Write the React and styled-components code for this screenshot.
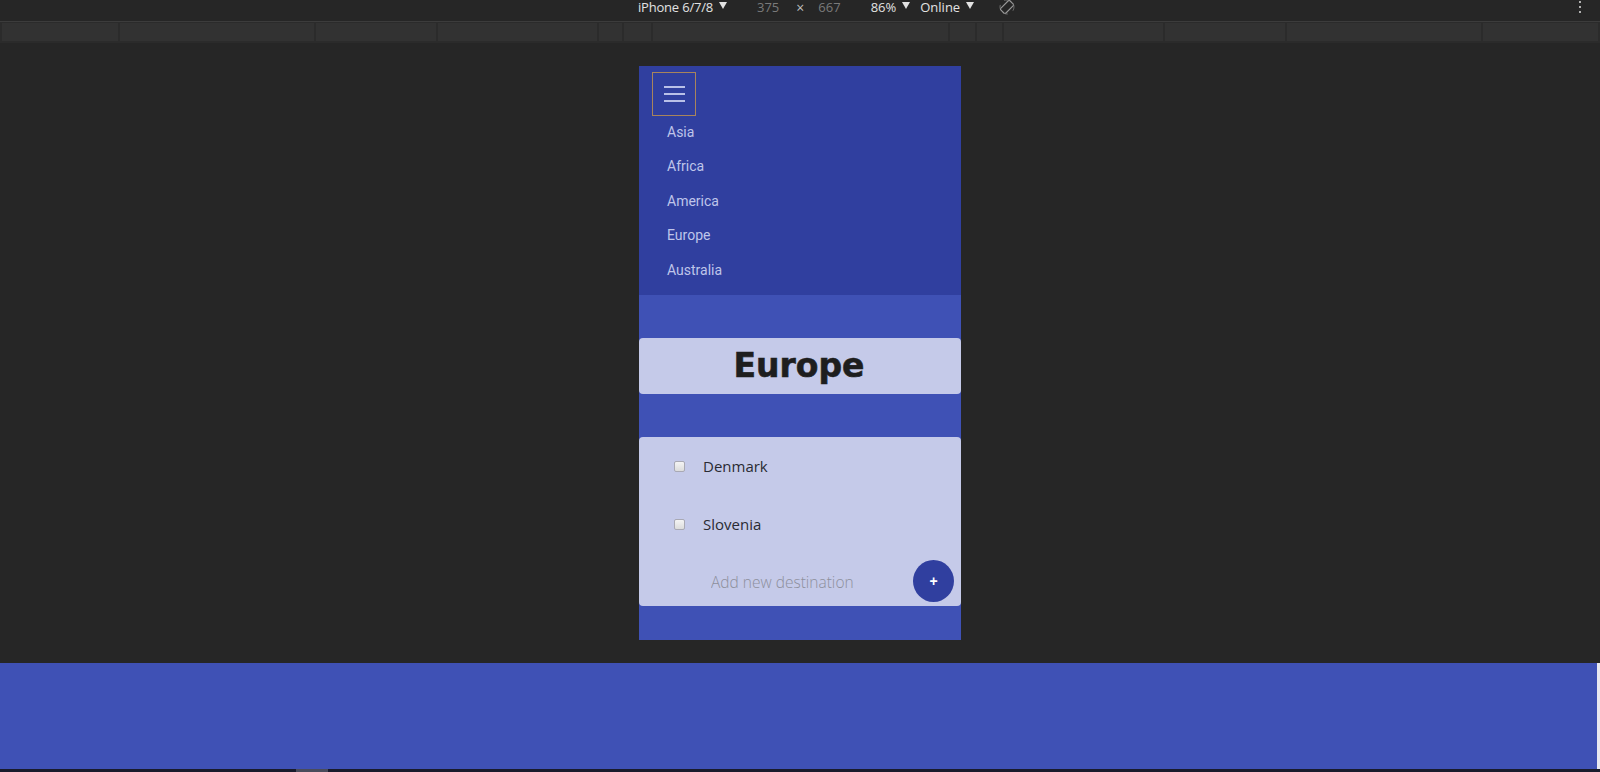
import React, { useState } from "react";
import styled, { createGlobalStyle } from "styled-components";

const GlobalStyle = createGlobalStyle`
  html, body {
    margin: 0;
    padding: 0;
    background: #262626;
    overflow: hidden;
  }
  * {
    box-sizing: border-box;
  }
`;

const regions = ["Asia", "Africa", "America", "Europe", "Australia"];
const rulerWidths = [118, 197, 121, 162, 23, 27, 300, 25, 25, 162, 121, 197, 117];

export default function App() {
  const [places, setPlaces] = useState([
    { name: "Denmark", done: false },
    { name: "Slovenia", done: false },
  ]);
  const [draft, setDraft] = useState("");

  function toggle(index) {
    setPlaces(places.map((p, i) => (i === index ? { ...p, done: !p.done } : p)));
  }

  function addPlace() {
    if (!draft.trim()) return;
    setPlaces([...places, { name: draft.trim(), done: false }]);
    setDraft("");
  }

  return (
    <>
      <GlobalStyle />
      <Screen>
        <Toolbar>
          <DeviceName>iPhone 6/7/8</DeviceName>
          <Caret />
          <Dim $left={30}>375</Dim>
          <Times>×</Times>
          <Dim $left={14}>667</Dim>
          <ToolText $left={30}>86%</ToolText>
          <Caret />
          <ToolText $left={10}>Online</ToolText>
          <Caret />
          <RotateIcon width="16" height="16" viewBox="0 0 16 16">
            <rect x="4.5" y="1.5" width="7" height="13" rx="1.5" transform="rotate(45 8 8)" fill="none" stroke="#9a9a9a" strokeWidth="1.1" />
            <circle cx="8" cy="8" r="7" fill="none" stroke="#7a7a7a" strokeWidth="0.8" strokeDasharray="4 6" />
          </RotateIcon>
          <MoreDots>
            <i />
            <i />
            <i />
          </MoreDots>
        </Toolbar>
        <Ruler>
          {rulerWidths.map((w, i) => (
            <RulerCell key={i} style={{ width: w }} />
          ))}
        </Ruler>
        <Stage>
          <Phone>
            <Nav>
              <MenuButton aria-label="menu">
                <span />
                <span />
                <span />
              </MenuButton>
              <NavList>
                {regions.map((r) => (
                  <NavItem key={r}>{r}</NavItem>
                ))}
              </NavList>
            </Nav>
            <Main>
              <TitleCard>
                <Title>Europe</Title>
              </TitleCard>
              <ListCard>
                {places.map((p, i) => (
                  <Row key={p.name}>
                    <Check $checked={p.done} onClick={() => toggle(i)} />
                    <PlaceName>{p.name}</PlaceName>
                  </Row>
                ))}
                <AddRow>
                  <AddInput
                    placeholder="Add new destination"
                    value={draft}
                    onChange={(e) => setDraft(e.target.value)}
                  />
                  <AddButton onClick={addPlace}>+</AddButton>
                </AddRow>
              </ListCard>
            </Main>
          </Phone>
        </Stage>
        <BottomPanel />
        <BottomBar>
          <Thumb />
        </BottomBar>
      </Screen>
    </>
  );
}

const Screen = styled.div`
  width: 1600px;
  height: 772px;
  display: flex;
  flex-direction: column;
  background: #262626;
`;

const Toolbar = styled.div`
  height: 22px;
  display: flex;
  align-items: center;
  padding: 0 0 7px 638px;
  font-family: "Open Sans", "Liberation Sans", sans-serif;
  font-size: 13px;
  line-height: 16px;
  color: #e2e2e2;
  border-bottom: 1px solid #3c3c3c;
  position: relative;
`;

const DeviceName = styled.span`
  white-space: nowrap;
  letter-spacing: -0.2px;
`;

const ToolText = styled.span`
  margin-left: ${(p) => p.$left}px;
  white-space: nowrap;
`;

const Caret = styled.span`
  width: 0;
  height: 0;
  margin-left: 6px;
  margin-top: -3px;
  border-left: 4px solid transparent;
  border-right: 4px solid transparent;
  border-top: 7px solid #e2e2e2;
`;

const Dim = styled.span`
  color: #7a7a7a;
  margin-left: ${(p) => p.$left}px;
`;

const Times = styled.span`
  color: #bdbdbd;
  font-size: 14px;
  line-height: 14px;
  margin-left: 17px;
  margin-top: 2px;
`;

const RotateIcon = styled.svg`
  margin-left: 25px;
`;

const MoreDots = styled.div`
  position: absolute;
  right: 19px;
  top: 1px;
  display: flex;
  flex-direction: column;
  gap: 3px;

  i {
    width: 2px;
    height: 2px;
    background: #b0b0b0;
  }
`;

const Ruler = styled.div`
  height: 21px;
  display: flex;
  gap: 2px;
  padding: 1px 2px 2px;
  background: #2b2b2b;
`;

const RulerCell = styled.div`
  height: 100%;
  background: #323232;
`;

const Stage = styled.div`
  flex: 1;
  display: flex;
  justify-content: center;
  padding-top: 23px;
  background: #262626;
`;

const Phone = styled.div`
  width: 322px;
  height: 574px;
  display: flex;
  flex-direction: column;
`;

const Nav = styled.nav`
  height: 229px;
  background: #303f9f;
  padding: 6px 0 0 13px;
`;

const MenuButton = styled.button`
  width: 44px;
  height: 44px;
  border: 1px solid #a8845c;
  background: transparent;
  display: flex;
  flex-direction: column;
  align-items: center;
  justify-content: center;
  gap: 5.5px;
  padding: 0;
  cursor: pointer;

  span {
    width: 21px;
    height: 1.5px;
    background: #b9c0e8;
  }
`;

const NavList = styled.ul`
  list-style: none;
  margin: 0;
  padding: 0 0 0 15px;
  display: flex;
  flex-direction: column;
`;

const NavItem = styled.li`
  height: 34.5px;
  line-height: 34.5px;
  font-family: Roboto, "Liberation Sans", sans-serif;
  font-size: 14px;
  color: #bfc5ea;
  cursor: pointer;

  &:first-child {
    height: 33px;
    line-height: 33px;
  }
`;

const Main = styled.main`
  flex: 1;
  background: #3f51b5;
  padding-top: 43px;
  display: flex;
  flex-direction: column;
  gap: 43px;
`;

const TitleCard = styled.div`
  height: 56px;
  background: #c5cae9;
  border-radius: 4px;
  display: flex;
  align-items: center;
  justify-content: center;
`;

const Title = styled.h1`
  margin: 0;
  font-family: "DejaVu Sans", "Liberation Sans", sans-serif;
  font-weight: 700;
  font-size: 33px;
  color: #1e1e1e;
  -webkit-text-stroke: 0.6px #1e1e1e;
  padding-bottom: 2px;
  padding-right: 2px;
`;

const ListCard = styled.div`
  height: 169px;
  background: #c5cae9;
  border-radius: 4px;
  padding-top: 0;
  display: flex;
  flex-direction: column;
`;

const Row = styled.label`
  height: 58px;
  display: flex;
  align-items: center;
  padding-left: 35px;
`;

const Check = styled.span`
  width: 11px;
  height: 11px;
  border-radius: 2px;
  border: 1px solid #a9a9b4;
  background: ${(p) => (p.$checked ? "#3f51b5" : "linear-gradient(#f4f4f4, #dcdcdc)")};
  cursor: pointer;
`;

const PlaceName = styled.span`
  margin-left: 18px;
  font-family: "Open Sans", "Liberation Sans", sans-serif;
  font-size: 15px;
  color: #2a2a33;
`;

const AddRow = styled.div`
  height: 42px;
  margin-top: 7px;
  display: flex;
  align-items: center;
  justify-content: space-between;
  padding: 0 7px 0 72px;
`;

const AddInput = styled.input`
  width: 180px;
  border: none;
  background: transparent;
  outline: none;
  font-family: "Open Sans", "Liberation Sans", sans-serif;
  font-weight: 300;
  font-size: 15.5px;
  color: #333;
  padding: 0;
  margin-top: 2px;

  &::placeholder {
    color: #8d8f9c;
  }
`;

const AddButton = styled.button`
  width: 41px;
  height: 42px;
  border-radius: 50%;
  border: none;
  background: #303f9f;
  color: #ffffff;
  font-family: "Liberation Sans", sans-serif;
  font-size: 14px;
  font-weight: 700;
  cursor: pointer;
  padding: 0;
`;

const BottomPanel = styled.div`
  height: 106px;
  background: #3f51b5;
  border-right: 3px solid #e8e8f0;
`;

const BottomBar = styled.div`
  height: 3px;
  background: #191b2c;
  padding-left: 296px;
`;

const Thumb = styled.div`
  width: 32px;
  height: 3px;
  background: #4a4c5c;
`;
